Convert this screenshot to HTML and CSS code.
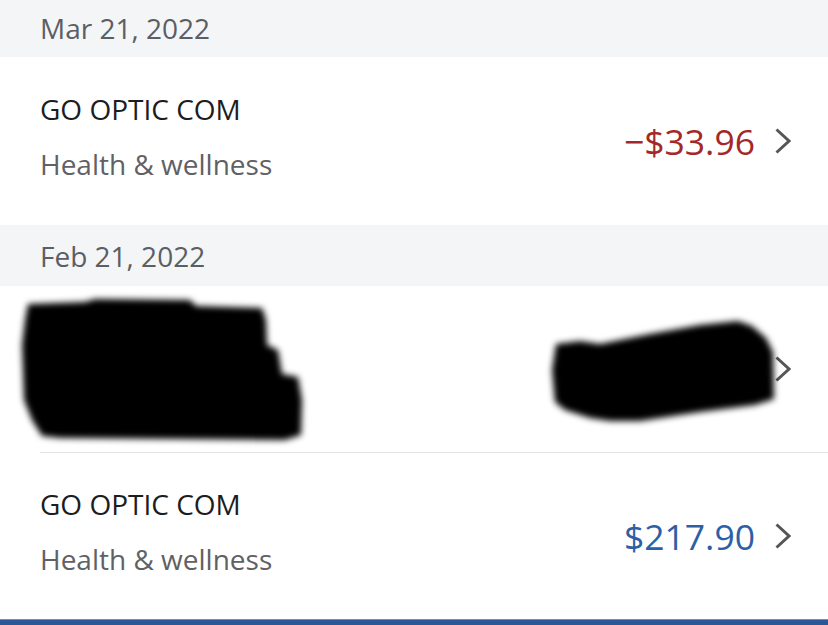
FILE: index.html
```html
<!DOCTYPE html>
<html lang="en">
<head>
<meta charset="utf-8">
<title>Transactions</title>
<link rel="stylesheet" href="styles.css">
</head>
<body>
<main class="ledger">
  <section class="day">
    <h2 class="day-head day-head-first">Mar 21, 2022</h2>
    <ul class="txns">
      <li class="txn txn-first">
        <div class="txn-info">
          <div class="txn-name">GO OPTIC COM</div>
          <div class="txn-cat">Health &amp; wellness</div>
        </div>
        <div class="txn-side">
          <span class="amount amount-debit">&minus;$33.96</span>
          <svg class="chev" viewBox="0 0 17 28" width="17" height="28" aria-hidden="true"><polyline points="2.5,2.5 15,14 2.5,25.5"/></svg>
        </div>
      </li>
    </ul>
  </section>
  <section class="day">
    <h2 class="day-head">Feb 21, 2022</h2>
    <ul class="txns">
      <li class="txn txn-redacted">
        <div class="txn-info">
          <div class="txn-name">&nbsp;</div>
          <div class="txn-cat">&nbsp;</div>
        </div>
        <div class="txn-side">
          <svg class="chev" viewBox="0 0 17 28" width="17" height="28" aria-hidden="true"><polyline points="2.5,2.5 15,14 2.5,25.5"/></svg>
        </div>
        <svg class="redaction" viewBox="0 286 828 166" width="828" height="166" aria-hidden="true">
          <defs>
            <filter id="smudge" x="-10%" y="-10%" width="120%" height="120%">
              <feGaussianBlur stdDeviation="3"/>
            </filter>
          </defs>
          <g filter="url(#smudge)" fill="#000">
            <path d="M28,304 L85,302 L95,299 L190,300 L196,306 L262,308 L266,320 L267,345 L278,350 L282,374 L298,377 L302,400 L301,435 L285,440 L60,438 L42,436 L32,420 L24,400 L22,345 L25,320 Z"/>
            <path d="M556,344 L580,341 L600,344 L650,334 L700,325 L738,321 L752,326 L766,338 L773,352 L774,399 L755,405 L700,412 L640,421 L610,421 L590,418 L565,410 L555,402 L552,370 Z"/>
          </g>
        </svg>
      </li>
      <li class="txn">
        <div class="txn-info">
          <div class="txn-name">GO OPTIC COM</div>
          <div class="txn-cat">Health &amp; wellness</div>
        </div>
        <div class="txn-side">
          <span class="amount amount-credit">$217.90</span>
          <svg class="chev" viewBox="0 0 17 28" width="17" height="28" aria-hidden="true"><polyline points="2.5,2.5 15,14 2.5,25.5"/></svg>
        </div>
      </li>
    </ul>
  </section>
  <div class="tabbar"></div>
</main>
</body>
</html>
```

FILE: styles.css
```css
html, body {
  margin: 0;
  padding: 0;
  background: #ffffff;
}

body {
  font-family: "Open Sans", "Noto Sans", "Liberation Sans", sans-serif;
  width: 828px;
  height: 625px;
  overflow: hidden;
}

.ledger {
  display: flex;
  flex-direction: column;
  height: 625px;
}

.day {
  display: flex;
  flex-direction: column;
}

.day-head {
  margin: 0;
  height: 61px;
  display: flex;
  align-items: center;
  padding-left: 40px;
  background: #f4f5f7;
  color: #5b5e63;
  font-size: 28px;
  font-weight: 400;
  line-height: 36px;
}

.day-head-first {
  height: 57px;
  padding-bottom: 2px;
  box-sizing: border-box;
}

.txns {
  list-style: none;
  margin: 0;
  padding: 0 0 0 40px;
}

.txn {
  position: relative;
  display: flex;
  justify-content: space-between;
  align-items: center;
  padding: 33px 37px 42px 0;
}

.txn-first {
  padding-top: 34px;
  padding-bottom: 43px;
}

.txn + .txn {
  border-top: 1px solid #e3e4e6;
}

.txn-info {
  display: flex;
  flex-direction: column;
  gap: 19px;
}

.txn-name {
  font-size: 28px;
  line-height: 36px;
  color: #1c1d1f;
}

.txn-cat {
  font-size: 28px;
  line-height: 36px;
  color: #5f6165;
}

.txn-side {
  display: flex;
  align-items: center;
  gap: 19px;
  margin-top: 9px;
}

.amount {
  font-size: 35.5px;
  line-height: 44px;
}

.amount-debit {
  color: #a3282a;
}

.amount-credit {
  color: #2d5fa6;
}

.chev {
  display: block;
  fill: none;
  stroke: #555659;
  stroke-width: 3;
}

.redaction {
  position: absolute;
  left: -40px;
  top: 0;
  pointer-events: none;
}

.tabbar {
  flex: 1;
  background: #2b5796;
  border-top: 1px solid #6f8fbf;
}
```
